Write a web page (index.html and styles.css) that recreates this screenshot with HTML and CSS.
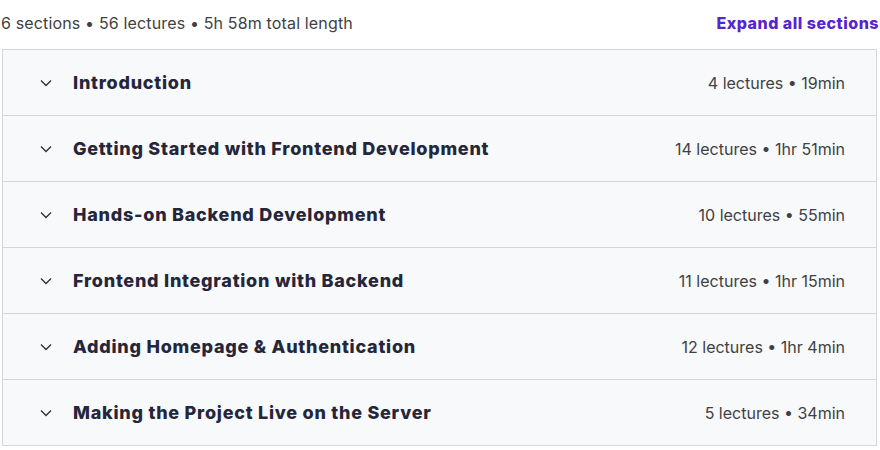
FILE: index.html
```html
<!DOCTYPE html>
<html lang="en">
<head>
    <meta charset="UTF-8">
    <meta name="viewport" content="width=device-width, initial-scale=1.0">
    <title>Course content</title>
    <link rel="stylesheet" href="styles.css">
</head>
<body>
    <div class="curriculum">
        <div class="summary">
            <span>6 sections • 56 lectures • 5h 58m total length</span>
            <button class="expand-all">Expand all sections</button>
        </div>

        <div class="sections">
            <div class="section">
                <span class="chevron"><svg viewBox="0 0 12 8" width="12" height="8"><path d="M1 1.5l5 5 5-5" fill="none" stroke="currentColor" stroke-width="1.3"/></svg></span>
                <h3>Introduction</h3>
                <span class="meta">4 lectures • 19min</span>
            </div>
            <div class="section">
                <span class="chevron"><svg viewBox="0 0 12 8" width="12" height="8"><path d="M1 1.5l5 5 5-5" fill="none" stroke="currentColor" stroke-width="1.3"/></svg></span>
                <h3>Getting Started with Frontend Development</h3>
                <span class="meta">14 lectures • 1hr 51min</span>
            </div>
            <div class="section">
                <span class="chevron"><svg viewBox="0 0 12 8" width="12" height="8"><path d="M1 1.5l5 5 5-5" fill="none" stroke="currentColor" stroke-width="1.3"/></svg></span>
                <h3>Hands-on Backend Development</h3>
                <span class="meta">10 lectures • 55min</span>
            </div>
            <div class="section">
                <span class="chevron"><svg viewBox="0 0 12 8" width="12" height="8"><path d="M1 1.5l5 5 5-5" fill="none" stroke="currentColor" stroke-width="1.3"/></svg></span>
                <h3>Frontend Integration with Backend</h3>
                <span class="meta">11 lectures • 1hr 15min</span>
            </div>
            <div class="section">
                <span class="chevron"><svg viewBox="0 0 12 8" width="12" height="8"><path d="M1 1.5l5 5 5-5" fill="none" stroke="currentColor" stroke-width="1.3"/></svg></span>
                <h3>Adding Homepage &amp; Authentication</h3>
                <span class="meta">12 lectures • 1hr 4min</span>
            </div>
            <div class="section">
                <span class="chevron"><svg viewBox="0 0 12 8" width="12" height="8"><path d="M1 1.5l5 5 5-5" fill="none" stroke="currentColor" stroke-width="1.3"/></svg></span>
                <h3>Making the Project Live on the Server</h3>
                <span class="meta">5 lectures • 34min</span>
            </div>
        </div>
    </div>
</body>
</html>
```
FILE: styles.css
```css
body {
    font-family: 'Inter', 'Noto Sans', sans-serif;
    margin: 0;
    background: #fff;
    color: #2d2f31;
}
.curriculum {
    padding: 0 3px 0 2px;
}
.summary {
    display: flex;
    justify-content: space-between;
    align-items: center;
    height: 45px;
    font-size: 16px;
    letter-spacing: 0.15px;
    color: #3e4143;
    margin-left: -1px;
}
.expand-all {
    background: none;
    border: none;
    padding: 0;
    font-family: inherit;
    font-size: 16px;
    font-weight: 800;
    letter-spacing: 0.5px;
    color: #5624d0;
    cursor: pointer;
    margin-right: -2px;
}
.sections {
    margin-top: 4px;
    border: 1px solid #d1d7dc;
    border-bottom: none;
}
.section {
    display: flex;
    align-items: center;
    height: 65px;
    padding: 0 31px 0 37px;
    background: #f7f9fa;
    border-bottom: 1px solid #d1d7dc;
}
.chevron {
    display: flex;
    width: 12px;
    color: #2d2f31;
    margin-right: 22px;
}
.section h3 {
    flex: 1;
    margin: 0 0 0 -1px;
    font-size: 18px;
    font-weight: 800;
    letter-spacing: 0.75px;
    color: #25263a;
}
.meta {
    font-size: 16px;
    color: #3e4143;
}
```
